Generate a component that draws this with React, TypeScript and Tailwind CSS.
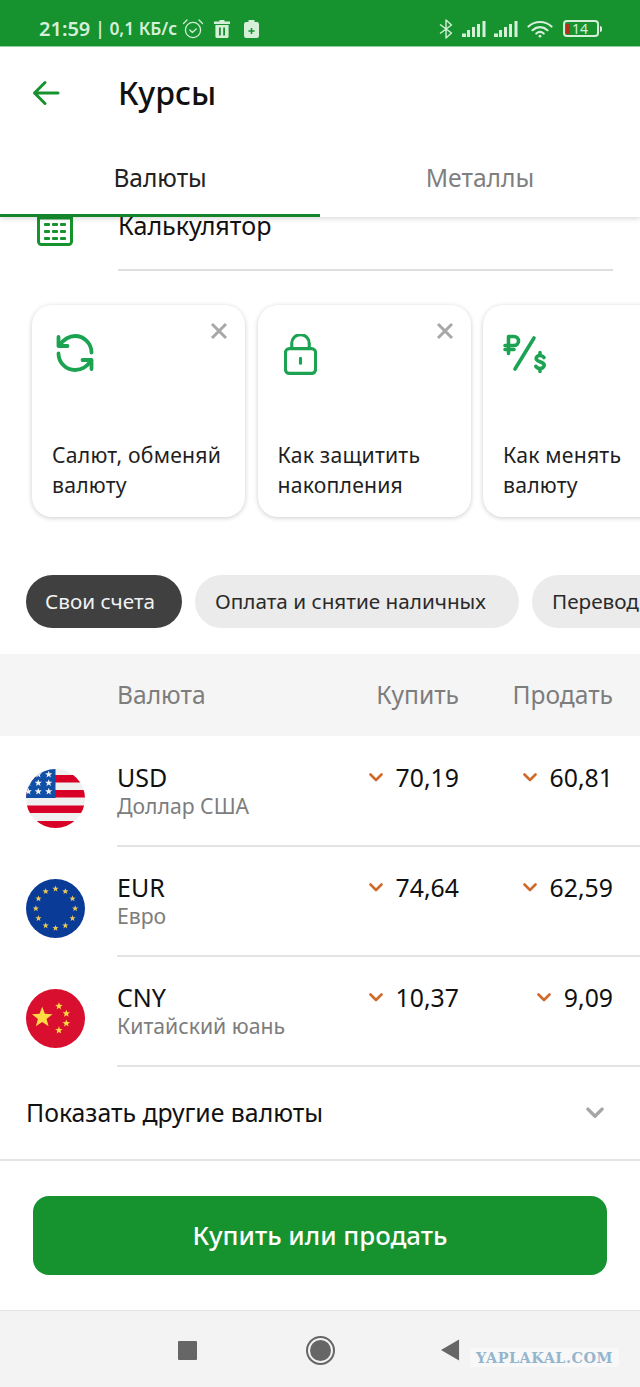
const Chevron = ({ className }: { className?: string }) => (
  <svg viewBox="0 0 14 9" className={className} fill="none" stroke="currentColor" strokeWidth="2.600" strokeLinecap="round" strokeLinejoin="round">
    <path d="M1.500 1.500 7 7l5.500-5.500" />
  </svg>
);

const Star = ({ x, y, r, fill }: { x: number; y: number; r: number; fill: string }) => {
  const pts = Array.from({ length: 10 }, (_, i) => {
    const a = -Math.PI / 2 + (i * Math.PI) / 5;
    const d = i % 2 === 0 ? r : r * 0.42;
    return `${(x + d * Math.cos(a)).toFixed(2)},${(y + d * Math.sin(a)).toFixed(2)}`;
  }).join(' ');
  return <polygon points={pts} fill={fill} />;
};

const UsFlag = () => (
  <svg viewBox="0 0 59 59" className="w-[59px] h-[59px] shrink-0">
    <defs>
      <clipPath id="us"><circle cx="29.500" cy="29.500" r="29.500" /></clipPath>
    </defs>
    <g clipPath="url(#us)">
      <rect width="59" height="59" fill="#f0f0f0" />
      <rect y="6" width="59" height="7.500" fill="#d80027" />
      <rect y="21" width="59" height="7.500" fill="#d80027" />
      <rect y="36.500" width="59" height="7.500" fill="#d80027" />
      <rect y="52" width="59" height="7" fill="#d80027" />
      <rect width="29.500" height="29" fill="#0f4fa8" />
      {[
        [22.700, 5.500], [12.300, 5.500], [22.700, 14], [12.300, 14], [2.300, 14], [22.700, 22.500], [12.300, 22.500], [2.300, 22.500],
      ].map(([x, y]) => (
        <Star key={`${x}-${y}`} x={x} y={y} r={3.800} fill="#f0f0f0" />
      ))}
    </g>
  </svg>
);

const EuFlag = () => (
  <svg viewBox="0 0 60 60" className="w-[59px] h-[59px] shrink-0">
    <circle cx="30" cy="30" r="30" fill="#0a3b96" />
    {Array.from({ length: 12 }, (_, i) => {
      const a = (i * Math.PI) / 6;
      return <Star key={i} x={30 + 20 * Math.sin(a)} y={30 - 20 * Math.cos(a)} r={3.300} fill="#e8c85a" />;
    })}
  </svg>
);

const CnFlag = () => (
  <svg viewBox="0 0 60 60" className="w-[59px] h-[59px] shrink-0">
    <circle cx="30" cy="30" r="30" fill="#d80f2e" />
    <Star x={16.500} y={29} r={11} fill="#ffda44" />
    <Star x={33.500} y={17.500} r={4} fill="#ffda44" />
    <Star x={41} y={25} r={4} fill="#ffda44" />
    <Star x={41} y={35} r={4} fill="#ffda44" />
    <Star x={33.500} y={42} r={4} fill="#ffda44" />
  </svg>
);

const SignalBars = ({ className }: { className: string }) => (
  <svg viewBox="0 0 24 18" className={className} fill="currentColor">
    <rect x="0" y="13.500" width="4" height="3.500" />
    <rect x="5" y="10" width="3" height="7" />
    <rect x="10" y="7" width="3" height="10" />
    <rect x="15" y="4" width="3" height="13" />
    <rect x="20.500" y="1" width="3" height="16" />
  </svg>
);

const StatusBar = () => (
  <div className="h-[47px] shrink-0 bg-[#16922f] flex items-center justify-between pl-[39px] pr-[38px] pt-[13px] pb-[2px] text-[#d5efd9] border-b border-[#9ad3a5]">
    <div className="flex items-center">
      <span className="text-[20px] font-semibold leading-none">21:59</span>
      <span className="text-[17.400px] font-semibold leading-none ml-[5px]">| 0,1 КБ/с</span>
      <svg viewBox="0 0 22 22" className="w-[22px] h-[22px] ml-[5px]" fill="none" stroke="currentColor" strokeWidth="1.300" strokeLinecap="round" strokeLinejoin="round">
        <circle cx="11" cy="12" r="7.600" />
        <path d="M7.800 12 10.400 14.400 14.200 11M1.500 5.500 5 2M20.500 5.500 17 2" />
      </svg>
      <svg viewBox="0 0 16 18" className="w-[16px] h-[18px] ml-[10px]" fill="currentColor">
        <path d="M5.500 0h5v1.500H16v2.600H0V1.500h5.500zM1.400 5h13.200v11.500a1.500 1.500 0 0 1-1.500 1.500H2.900a1.500 1.500 0 0 1-1.500-1.500z" />
        <path d="M5 7.500h1.800v8H5zM9.200 7.500H11v8H9.200z" fill="#16922f" />
      </svg>
      <svg viewBox="0 0 15 18" className="w-[15px] h-[18px] ml-[14px]" fill="currentColor">
        <path d="M4.500 0h6v2h2.300A2.200 2.200 0 0 1 15 4.200v11.600a2.200 2.200 0 0 1-2.200 2.200H2.200A2.200 2.200 0 0 1 0 15.800V4.200A2.200 2.200 0 0 1 2.200 2h2.300z" />
        <path d="M6.700 8h1.600v2.300h2.300v1.500H8.300v2.300H6.700v-2.300H4.400v-1.500h2.300z" fill="#16922f" />
      </svg>
    </div>
    <div className="flex items-center">
      <svg viewBox="0 0 14 20" className="w-[14px] h-[20px]" fill="none" stroke="currentColor" strokeWidth="1.400" strokeLinejoin="round">
        <path d="M1 5.500 12.500 14 7 19V1l5.500 5L1 14.500" />
      </svg>
      <SignalBars className="w-[24px] h-[18px] ml-[9px]" />
      <SignalBars className="w-[24px] h-[18px] ml-[8px]" />
      <svg viewBox="0 0 26 18" className="w-[26px] h-[18px] ml-[9px]" fill="none" stroke="currentColor" strokeWidth="2.200" strokeLinecap="round">
        <path d="M1.500 6.500C8 .5 18 .5 24.500 6.500M5.500 10.200c4.500-4 10.500-4 15 0M9.300 13.500c2.300-1.900 5.100-1.900 7.400 0" />
        <circle cx="13" cy="16.200" r="1.400" fill="currentColor" stroke="none" />
      </svg>
      <div className="flex items-center ml-[10px]">
        <div className="w-[36px] h-[17px] border-[2px] border-current rounded-[4px] flex items-center pl-[1px]">
          <span className="w-[4px] h-[10px] bg-[#b3311a]" />
          <span className="text-[14px] leading-none ml-[2px]">14</span>
        </div>
        <span className="w-[2px] h-[6px] bg-current ml-[1px] rounded-r-sm" />
      </div>
    </div>
  </div>
);

const PromoCard = ({ icon, label, close = true }: { icon: React.ReactNode; label: string[]; close?: boolean }) => (
  <div className="relative w-[213px] h-[212px] shrink-0 bg-white rounded-[20px] shadow-[0_1px_5px_rgba(0,0,0,0.2)] pl-[20px] pr-2">
    {close && (
      <svg viewBox="0 0 18 18" className="absolute top-[17px] right-[17px] w-[18px] h-[18px]" stroke="#a8a8a8" strokeWidth="3" fill="none">
        <path d="M2 2l14 14M16 2 2 16" />
      </svg>
    )}
    <div className="h-[135px] pt-[29px]">{icon}</div>
    <p className="text-[21.200px] leading-[29.500px] tracking-[0.2px] text-[#1f1f1f]">
      {label[0]}
      <br />
      {label[1]}
    </p>
  </div>
);

const Rate = ({ value }: { value: string }) => (
  <span className="flex items-center justify-end gap-[13px]">
    <Chevron className="w-[14px] h-[9px] text-[#cf6a2a]" />
    <span className="text-[24.800px] leading-none text-[#111]">{value}</span>
  </span>
);

const CurrencyRow = ({ flag, code, name, buy, sell }: { flag: React.ReactNode; code: string; name: string; buy: string; sell: string }) => (
  <div className="h-[110px] flex pl-[26px]">
    <div className="pt-[32px] w-[91px] shrink-0">{flag}</div>
    <div className="flex-1 flex pr-[27px] pt-[27px] border-b-2 border-[#e4e4e4]">
      <div className="flex-1">
        <div className="text-[25px] leading-[26px] text-[#111]">{code}</div>
        <div className="text-[21.200px] leading-[28px] text-[#7d7d7d] mt-[2px]">{name}</div>
      </div>
      <div className="w-[120px] pt-[1px] h-[26px] flex justify-end items-center"><Rate value={buy} /></div>
      <div className="w-[154px] pt-[1px] h-[26px] flex justify-end items-center"><Rate value={sell} /></div>
    </div>
  </div>
);

export default function App() {
  return (
    <div className="w-[640px] h-[1387px] flex flex-col bg-white overflow-hidden font-['Noto_Sans',sans-serif]">
      <StatusBar />

      {/* top bar with tabs */}
      <div className="relative z-10 bg-white shadow-[0_2px_5px_rgba(0,0,0,0.14)]">
        <div className="h-[92px] flex items-center pl-[32px]">
          <svg viewBox="0 0 28 26" className="w-[28px] h-[26px]" fill="none" stroke="#16922f" strokeWidth="3" strokeLinecap="round" strokeLinejoin="round">
            <path d="M26 13H2.500M13 2.500 2.500 13 13 23.500" />
          </svg>
          <h1 className="ml-[58px] text-[32px] leading-none font-medium text-[#111]">Курсы</h1>
        </div>
        <div className="h-[78px] flex">
          <div className="w-[320px] border-b-[3px] border-[#16862c] flex justify-center pt-[23px] text-[24.500px] leading-[32px] text-[#222]">Валюты</div>
          <div className="w-[320px] flex justify-center pt-[23px] text-[24.700px] leading-[32px] text-[#7f7f7f]">Металлы</div>
        </div>
      </div>

      {/* scrolled content, first row slides under the tabs */}
      <div className="flex-1 min-h-0 flex flex-col">
        <div className="flex h-[54px] shrink-0 pl-[37px] pr-[27px]">
          <svg viewBox="0 0 36 36" className="w-[36px] h-[36px] -mt-[7px] shrink-0" fill="none">
            <rect x="1.500" y="1.500" width="33" height="33" rx="3" stroke="#16922f" strokeWidth="3" />
            <rect x="1.500" y="1.500" width="33" height="8" fill="#16922f" />
            {[14, 21, 28].map((y) => [7, 15, 23].map((x) => <rect key={`${x}-${y}`} x={x} y={y - 1} width="6" height="3" rx="1" fill="#16922f" />))}
          </svg>
          <div className="ml-[45px] flex-1 border-b-2 border-[#dedede] text-[25.100px] leading-[16px] text-[#111]">Калькулятор</div>
        </div>

        <div className="flex gap-[12.500px] pl-[32px] mt-[34px] shrink-0">
          <PromoCard
            label={['Салют, обменяй', 'валюту']}
            icon={
              <svg viewBox="0 0 38 38" className="w-[38px] h-[38px] ml-[4px]" fill="none" stroke="#1ca352" strokeWidth="3.800" strokeLinecap="round" strokeLinejoin="round">
                <path d="M3.500 11.500C7 5.500 13.500 2 19 2c9 0 16.500 7.500 16.500 16.500M35 26.500C31.500 32.500 25 36 19 36 10 36 2.500 28.500 2.500 19.500" />
                <path d="M2.500 3v9h9M35.500 35v-9h-9" />
              </svg>
            }
          />
          <PromoCard
            label={['Как защитить', 'накопления']}
            icon={
              <svg viewBox="0 0 34 42" className="w-[33px] h-[41px] ml-[6px]" fill="none" stroke="#1ca352" strokeWidth="3.200">
                <rect x="1.500" y="15" width="31" height="25.500" rx="4" />
                <path d="M8 15V9.500a9 9 0 0 1 18 0V15" />
                <path d="M17 25v5" strokeLinecap="round" />
              </svg>
            }
          />
          <PromoCard
            close={false}
            label={['Как менять', 'валюту']}
            icon={
              <svg viewBox="0 0 44 40" className="w-[44px] h-[40px]" fill="none" stroke="#1ca352" strokeWidth="3.600" strokeLinecap="round" strokeLinejoin="round">
                <path d="M5.500 19.500V2.500h5.500a4.500 4.500 0 0 1 0 9H2M2 15.500h9" />
                <path d="M29 3 10 34" transform="translate(2 1)" />
                <path d="M41 23.500c-1-1.500-2.300-2-4-2-2.200 0-3.800 1.200-3.800 3 0 4 8 2.500 8 6.800 0 1.900-1.800 3.200-4.200 3.200-1.800 0-3.300-.7-4.200-2.200M37 18.500v3M37 34.500v3" />
              </svg>
            }
          />
        </div>

        <div className="flex gap-[13px] pl-[26px] mt-[58px] shrink-0 text-[20.700px]">
          <div className="h-[53px] pl-[19px] w-[156px] rounded-full bg-[#404040] text-[#f2f2f2] flex items-center shrink-0">Свои счета</div>
          <div className="h-[53px] pl-[20px] w-[324px] rounded-full bg-[#ebebeb] text-[#2a2a2a] flex items-center shrink-0">Оплата и снятие наличных</div>
          <div className="h-[53px] px-[20px] rounded-full bg-[#ebebeb] text-[#2a2a2a] flex items-center shrink-0">Переводы</div>
        </div>

        <div className="h-[82px] mt-[26px] mb-[1px] shrink-0 bg-[#f5f5f5] flex items-center pl-[117px] pr-[27px] text-[24.600px] text-[#7d7d7d]">
          <span className="flex-1">Валюта</span>
          <span className="w-[120px] text-right">Купить</span>
          <span className="w-[154px] text-right">Продать</span>
        </div>

        <CurrencyRow flag={<UsFlag />} code="USD" name="Доллар США" buy="70,19" sell="60,81" />
        <CurrencyRow flag={<EuFlag />} code="EUR" name="Евро" buy="74,64" sell="62,59" />
        <CurrencyRow flag={<CnFlag />} code="CNY" name="Китайский юань" buy="10,37" sell="9,09" />

        <div className="h-[94px] shrink-0 flex items-center justify-between pl-[26px] pr-[36px] border-b-2 border-[#e4e4e4]">
          <span className="text-[24.800px] text-[#111]">Показать другие валюты</span>
          <Chevron className="w-[18px] h-[12px] text-[#a6a6a6]" />
        </div>

        <div className="flex-1 flex items-start px-[33px] pt-[35px]">
          <button className="w-full h-[79px] rounded-[16px] bg-[#16922f] text-white text-[25.800px] font-medium">Купить или продать</button>
        </div>
      </div>

      {/* system navigation */}
      <div className="relative h-[77px] shrink-0 bg-[#f3f3f3] border-t border-[#e2e2e2] flex items-center pt-[2px]">
        <span className="ml-[178px] w-[19px] h-[19px] bg-[#666] rounded-[1px]" />
        <span className="ml-[109px] w-[29px] h-[29px] rounded-full border-[2px] border-[#666] p-[2px]">
          <span className="block w-full h-full rounded-full bg-[#666]" />
        </span>
        <svg viewBox="0 0 20 22" className="ml-[106px] w-[19px] h-[22px]" fill="#666"><path d="M19 0v22L0 11z" /></svg>
        <span className="absolute left-[470px] top-[37px] h-[19px] w-[149px] bg-[#f8f8f8] flex items-center justify-center text-[14.400px] font-bold tracking-[0.5px] text-[#94b6cd] font-['DejaVu_Serif',serif]">YAPLAKAL.COM</span>
      </div>
    </div>
  );
}
